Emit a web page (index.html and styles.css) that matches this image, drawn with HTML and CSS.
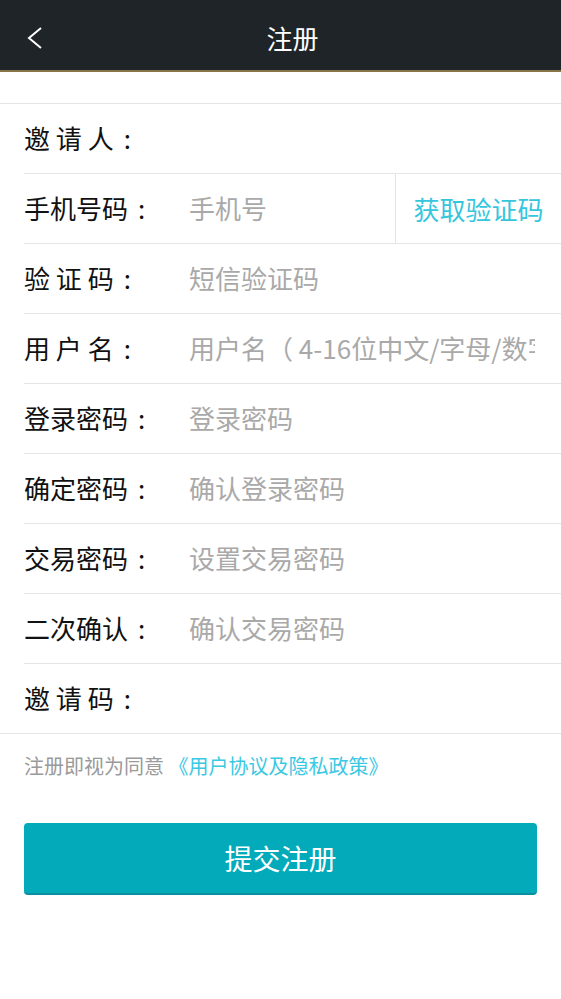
FILE: index.html
```html
<!DOCTYPE html>
<html lang="zh-CN">
<head>
<meta charset="utf-8">
<title>注册</title>
<link rel="stylesheet" href="styles.css">
</head>
<body>
<header class="topbar">
  <div class="back">
    <svg width="24" height="24" viewBox="0 0 24 24"><polyline points="17,2 5,12 17,22" fill="none" stroke="#ffffff" stroke-width="2"/></svg>
  </div>
  <div class="title">注册</div>
  <div class="spacer"></div>
</header>
<div class="gap"></div>
<form class="form">
  <div class="row"><span class="label">邀 请 人<span class="colon">:</span></span><input class="field" type="text"></div>
  <div class="row"><span class="label">手机号码<span class="colon">:</span></span><input class="field" type="text" placeholder="手机号"><span class="getcode">获取验证码</span></div>
  <div class="row"><span class="label">验 证 码<span class="colon">:</span></span><input class="field" type="text" placeholder="短信验证码"></div>
  <div class="row"><span class="label">用 户 名<span class="colon">:</span></span><input class="field wide" type="text" placeholder="用户名（ 4-16位中文/字母/数字）"></div>
  <div class="row"><span class="label">登录密码<span class="colon">:</span></span><input class="field" type="text" placeholder="登录密码"></div>
  <div class="row"><span class="label">确定密码<span class="colon">:</span></span><input class="field" type="text" placeholder="确认登录密码"></div>
  <div class="row"><span class="label">交易密码<span class="colon">:</span></span><input class="field" type="text" placeholder="设置交易密码"></div>
  <div class="row"><span class="label">二次确认<span class="colon">:</span></span><input class="field" type="text" placeholder="确认交易密码"></div>
  <div class="row last"><span class="label">邀 请 码<span class="colon">:</span></span><input class="field" type="text"></div>
</form>
<p class="agree">注册即视为同意 <span class="link">《用户协议及隐私政策》</span></p>
<div class="submit">提交注册</div>
</body>
</html>
```

FILE: styles.css
```css
html, body {
  margin: 0;
  padding: 0;
  background: #ffffff;
  font-family: "Noto Sans CJK SC", "Noto Sans", sans-serif;
}

.topbar {
  box-sizing: border-box;
  height: 72px;
  padding-top: 6px;
  background: #1e2428;
  border-bottom: 2px solid #877548;
  display: grid;
  grid-template-columns: 84px 1fr 60px;
  align-items: center;
}

.back {
  padding-left: 24px;
  display: flex;
  align-items: center;
}

.back svg {
  display: block;
}

.title {
  text-align: center;
  color: #ffffff;
  font-size: 26px;
  line-height: 34px;
}

.gap {
  height: 31px;
}

.form {
  margin: 0;
  border-top: 1px solid #e6e6e6;
  border-bottom: 1px solid #e6e6e6;
}

.row {
  box-sizing: border-box;
  height: 70px;
  margin-left: 24px;
  padding-bottom: 3px;
  border-bottom: 1px solid #e6e6e6;
  display: flex;
  align-items: center;
}

.row.last {
  height: 69px;
  border-bottom: none;
}

.label {
  flex: 0 0 165px;
  font-size: 26px;
  color: #111111;
  white-space: pre;
}

.colon {
  padding-left: 10px;
}

.field {
  flex: 1;
  min-width: 0;
  border: none;
  outline: none;
  padding: 0 20px 0 0;
  margin: 0;
  background: transparent;
  font-family: "Noto Sans CJK SC", "Noto Sans", sans-serif;
  font-size: 26px;
  color: #333333;
  height: 40px;
}

.field.wide {
  padding-right: 26px;
}

.field::placeholder {
  color: #a9a9a9;
}

.getcode {
  flex: 0 0 165px;
  align-self: stretch;
  margin-bottom: -3px;
  border-left: 1px solid #e3e3e3;
  display: flex;
  align-items: center;
  justify-content: center;
  font-size: 26px;
  color: #35c6de;
}

.agree {
  margin: 0;
  padding: 19px 24px 0;
  font-size: 20px;
  line-height: 26px;
  color: #9a9a9a;
}

.link {
  color: #3cc8e3;
}

.submit {
  box-sizing: border-box;
  margin: 44px 24px 0;
  height: 72px;
  border-radius: 4px;
  background: #02aaba;
  border-bottom: 2px solid #08909e;
  color: #ffffff;
  font-size: 28px;
  display: flex;
  align-items: center;
  justify-content: center;
}
```
